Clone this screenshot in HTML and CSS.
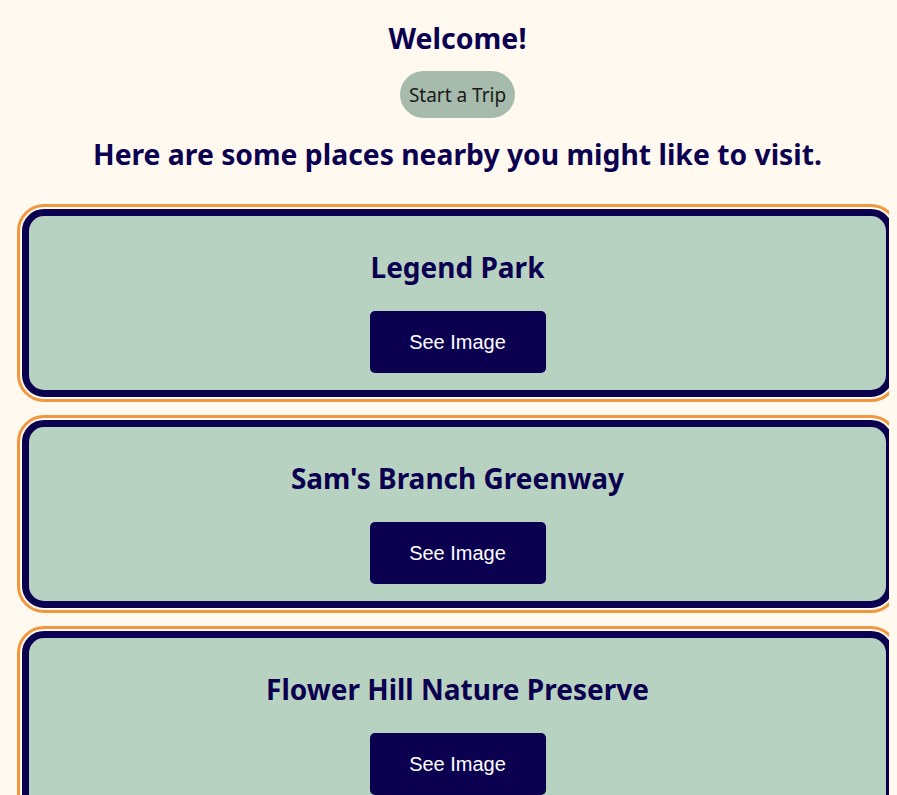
FILE: index.html
```html
<!DOCTYPE html>
<html lang="en">
<head>
<meta charset="utf-8">
<title>Welcome</title>
<link rel="stylesheet" href="styles.css">
</head>
<body>
<main class="page">
  <h1 class="welcome">Welcome!</h1>
  <button class="trip-btn">Start a Trip</button>
  <h2 class="intro">Here are some places nearby you might like to visit.</h2>
  <section class="places">
    <article class="place">
      <h3 class="place-name">Legend Park</h3>
      <button class="see-btn">See Image</button>
    </article>
    <article class="place">
      <h3 class="place-name">Sam's Branch Greenway</h3>
      <button class="see-btn">See Image</button>
    </article>
    <article class="place">
      <h3 class="place-name">Flower Hill Nature Preserve</h3>
      <button class="see-btn">See Image</button>
    </article>
  </section>
</main>
</body>
</html>
```
FILE: styles.css
```css
html {
  overflow-x: hidden;
}
html, body {
  background: #fff9ef;
}
body {
  margin: 8px;
  font-family: "Noto Sans", "Open Sans", sans-serif;
  color: #0b0050;
}
.page {
  width: 899px;
  display: flex;
  flex-direction: column;
  align-items: center;
}
.welcome {
  font-size: 28.5px;
  line-height: 37px;
  font-weight: 700;
  margin: 12px 0 14px;
}
.trip-btn {
  font-family: "Noto Sans", "Open Sans", sans-serif;
  font-size: 19px;
  color: #1a1a1a;
  background: #a6bbab;
  border: none;
  border-radius: 24px;
  height: 47px;
  padding: 0 9px;
}
.intro {
  font-size: 28.3px;
  line-height: 37px;
  font-weight: 700;
  margin: 18px 0 36px;
}
.places {
  align-self: stretch;
  display: flex;
  flex-direction: column;
  gap: 23px;
  margin: 0 14px;
}
.place {
  background: #b8d2c2;
  border: 7px solid #0b0050;
  border-radius: 22px;
  outline: 3px solid #f0983f;
  outline-offset: 2px;
  display: flex;
  flex-direction: column;
  align-items: center;
  padding: 33px 0 17px;
}
.place-name {
  font-size: 28px;
  line-height: 37px;
  font-weight: 700;
  margin: 0 0 25px;
}
.see-btn {
  font-family: "Liberation Sans", Arial, sans-serif;
  font-size: 20px;
  color: #ffffff;
  background: #0b0050;
  border: none;
  border-radius: 5px;
  width: 176px;
  height: 62px;
}
```
